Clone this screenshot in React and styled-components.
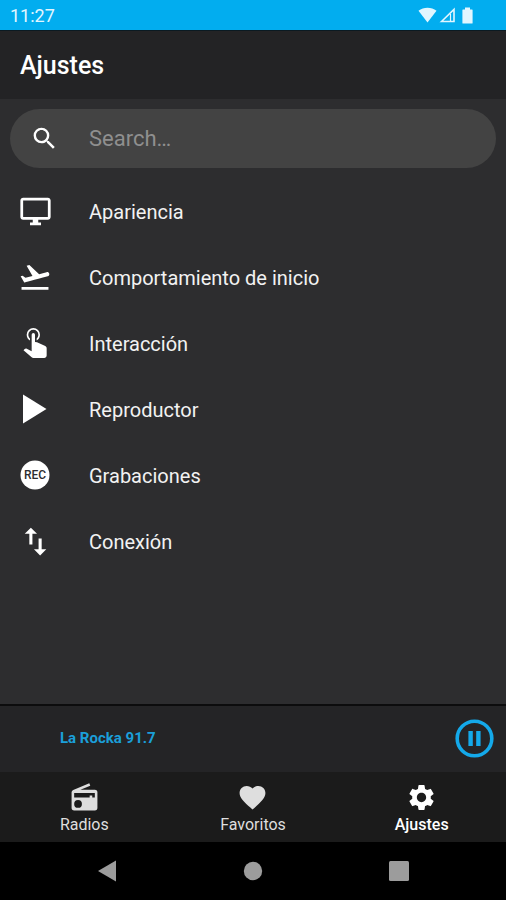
import React from "react";
import styled, { createGlobalStyle } from "styled-components";
import {
  MdSearch,
  MdOutlineDesktopWindows,
  MdFlightTakeoff,
  MdImportExport,
  MdFavorite,
  MdSettings,
} from "react-icons/md";

const GlobalStyle = createGlobalStyle`
  * { box-sizing: border-box; }
  body {
    margin: 0;
    background: #2d2d2f;
    font-family: Roboto, "Liberation Sans", sans-serif;
  }
  button, input { font: inherit; }
`;

const Screen = styled.div`
  display: flex;
  flex-direction: column;
  min-height: 100vh;
  background: #2d2d2f;
  color: #f2f2f2;
`;

const StatusBar = styled.div`
  display: flex;
  align-items: center;
  justify-content: space-between;
  height: 31px;
  padding: 0 30px 0 10px;
  background: #02adef;
  border-bottom: 1px solid #0b1a22;
  color: #e2f6ff;
  font-size: 18px;
`;

const StatusIcons = styled.div`
  display: flex;
  align-items: center;
  gap: 2px;
`;

const Header = styled.header`
  display: flex;
  align-items: center;
  height: 68px;
  padding: 2px 20px 0;
  background: #232325;
`;

const Title = styled.h1`
  margin: 0;
  font-size: 25px;
  line-height: 32px;
  font-weight: 500;
  color: #ffffff;
`;

const Main = styled.main`
  flex: 1;
`;

const SearchBox = styled.label`
  display: flex;
  align-items: center;
  gap: 30px;
  height: 59px;
  margin: 10px 10px;
  padding: 0 20px;
  border-radius: 30px;
  background: #434343;
  color: #ffffff;
`;

const SearchInput = styled.input`
  flex: 1;
  min-width: 0;
  padding: 0;
  border: 0;
  outline: 0;
  background: transparent;
  color: #ffffff;
  font-size: 22px;
  &::placeholder {
    color: #8f8f8f;
    opacity: 1;
  }
`;

const SettingsList = styled.ul`
  margin: 0;
  padding: 0;
  list-style: none;
`;

const SettingButton = styled.button`
  display: flex;
  align-items: center;
  gap: 34px;
  width: 100%;
  height: 66px;
  padding: 0 15px;
  border: 0;
  background: transparent;
  color: #f2f2f2;
  font-size: 20px;
  text-align: left;
`;

const SettingLabel = styled.span`
  padding-top: 2px;
`;

const IconSlot = styled.span`
  display: flex;
  align-items: center;
  justify-content: center;
  width: 40px;
  height: 40px;
  color: #ffffff;
`;

const Player = styled.section`
  display: flex;
  align-items: center;
  justify-content: space-between;
  height: 68px;
  padding: 0 12px 2px 60px;
  border-top: 2px solid #0c0c0d;
  background: #242426;
  color: #1b9fd9;
  font-size: 15px;
  font-weight: 700;
`;

const PauseButton = styled.button`
  display: flex;
  padding: 0;
  border: 0;
  background: transparent;
  color: #14a9ea;
`;

const Tabs = styled.nav`
  display: grid;
  grid-template-columns: repeat(3, 1fr);
  height: 70px;
  background: #1b1b1b;
`;

const Tab = styled.a`
  display: flex;
  flex-direction: column;
  align-items: center;
  padding-top: 10px;
  gap: 2px;
  color: ${(p) => (p.$active ? "#ffffff" : "#dedede")};
  font-size: 16px;
  line-height: 20px;
  font-weight: ${(p) => (p.$active ? 500 : 400)};
  text-decoration: none;
`;

const SystemBar = styled.div`
  display: flex;
  align-items: center;
  justify-content: center;
  gap: 106px;
  height: 58px;
  background: #000000;
`;

const SystemButton = styled.button`
  display: flex;
  align-items: center;
  justify-content: center;
  width: 40px;
  height: 40px;
  padding: 0;
  border: 0;
  background: transparent;
  color: #9c9c9c;
`;

const TouchIcon = () => (
  <svg width="40" height="40" viewBox="0 2 24 24" fill="currentColor" aria-hidden="true">
    <path d="M10 9a1 1 0 0 1 2 0v4.470l1.210.130 4.940 2.190c.530.240.850.770.850 1.350v4.360c-.030.820-.680 1.470-1.500 1.500H11c-.380 0-.740-.150-1-.430l-4.900-4.200.740-.770c.190-.210.460-.320.740-.320h.220L10 19V9m1-4a4 4 0 0 1 4 4c0 1.500-.800 2.770-2 3.460v-1.220c.610-.550 1-1.350 1-2.240a3 3 0 0 0-6 0c0 .890.390 1.690 1 2.240v1.220C7.800 11.770 7 10.500 7 9a4 4 0 0 1 4-4z" />
  </svg>
);

const RadioIcon = () => (
  <svg width="31" height="31" viewBox="0 0 24 24" fill="currentColor" aria-hidden="true">
    <path
      fillRule="evenodd"
      d="M20 6a2 2 0 0 1 2 2v12a2 2 0 0 1-2 2H4a2 2 0 0 1-2-2V8c0-.850.530-1.580 1.280-1.870L15.710 1l.760 1.830L8.830 6H20zM20 8.500H4V12h12v-1.500h2V12h2V8.500zM7 14a3 3 0 1 0 0 6 3 3 0 0 0 0-6z"
    />
  </svg>
);

const PlayIcon = () => (
  <svg width="30" height="30" viewBox="0 0 30 30" fill="currentColor" aria-hidden="true">
    <path d="M3 0.5 26.5 15 3 29.5z" />
  </svg>
);

const RecIcon = () => (
  <svg width="30" height="30" viewBox="0 0 30 30" aria-hidden="true">
    <circle cx="15" cy="15" r="14.5" fill="#ffffff" />
    <text
      x="15"
      y="19"
      textAnchor="middle"
      fill="#2d2d2f"
      fontFamily="Roboto, sans-serif"
      fontWeight="500"
      fontSize="12"
    >
      REC
    </text>
  </svg>
);

const settings = [
  { label: "Apariencia", icon: <MdOutlineDesktopWindows size={33} /> },
  { label: "Comportamiento de inicio", icon: <MdFlightTakeoff size={34} /> },
  { label: "Interacción", icon: <TouchIcon /> },
  { label: "Reproductor", icon: <PlayIcon /> },
  { label: "Grabaciones", icon: <RecIcon /> },
  { label: "Conexión", icon: <MdImportExport size={37} /> },
];

const tabs = [
  { label: "Radios", href: "#radios", icon: <RadioIcon /> },
  { label: "Favoritos", href: "#favoritos", icon: <MdFavorite size={31} /> },
  { label: "Ajustes", href: "#ajustes", icon: <MdSettings size={31} />, active: true },
];

export default function App() {
  return (
    <>
      <GlobalStyle />
      <Screen>
        <StatusBar>
          <span>11:27</span>
          <StatusIcons>
            <svg width="19" height="16" viewBox="0 0 19 16" fill="currentColor" aria-hidden="true">
              <path d="M9.500 15.500 0.500 3.800C5.500-.2 13.500-.2 18.500 3.800z" />
            </svg>
            <svg width="17" height="16" viewBox="0 0 17 16" fill="none" stroke="currentColor" aria-hidden="true">
              <path d="M2.500 14.500 15 2.500v12z" strokeWidth="1.600" />
              <path d="M11.500 7v7" strokeWidth="1.200" />
            </svg>
            <svg width="18" height="17" viewBox="0 0 18 17" fill="currentColor" aria-hidden="true">
              <path d="M7 0.500h5v2h2q.6 0 .6.600v12.800q0 .6-.6.600H5q-.6 0-.6-.6V3.100q0-.6.600-.6h2z" />
            </svg>
          </StatusIcons>
        </StatusBar>
        <Header>
          <Title>Ajustes</Title>
        </Header>
        <Main>
          <SearchBox>
            <MdSearch size={29} />
            <SearchInput type="text" placeholder="Search…" aria-label="Search" />
          </SearchBox>
          <SettingsList>
            {settings.map((s) => (
              <li key={s.label}>
                <SettingButton type="button">
                  <IconSlot>{s.icon}</IconSlot>
                  <SettingLabel>{s.label}</SettingLabel>
                </SettingButton>
              </li>
            ))}
          </SettingsList>
        </Main>
        <Player>
          <span>La Rocka 91.7</span>
          <PauseButton type="button" aria-label="Pausa">
            <svg width="39" height="39" viewBox="0 0 39 39" aria-hidden="true">
              <circle cx="19.500" cy="19.500" r="17.300" fill="none" stroke="currentColor" strokeWidth="3.600" />
              <path d="M13.400 12h4.400v15h-4.400zM21.200 12h4.400v15h-4.400z" fill="currentColor" />
            </svg>
          </PauseButton>
        </Player>
        <Tabs>
          {tabs.map((t) => (
            <Tab
              key={t.label}
              href={t.href}
              $active={t.active}
              aria-current={t.active ? "page" : undefined}
            >
              {t.icon}
              {t.label}
            </Tab>
          ))}
        </Tabs>
        <SystemBar>
          <SystemButton type="button" aria-label="Atrás">
            <svg width="20" height="22" viewBox="0 0 20 22" fill="currentColor" aria-hidden="true">
              <path d="M1 11 19 0.500v21z" />
            </svg>
          </SystemButton>
          <SystemButton type="button" aria-label="Inicio">
            <svg width="20" height="20" viewBox="0 0 20 20" fill="currentColor" aria-hidden="true">
              <circle cx="10" cy="10" r="9.200" />
            </svg>
          </SystemButton>
          <SystemButton type="button" aria-label="Recientes">
            <svg width="20" height="20" viewBox="0 0 20 20" fill="currentColor" aria-hidden="true">
              <rect width="20" height="20" rx="1.500" />
            </svg>
          </SystemButton>
        </SystemBar>
      </Screen>
    </>
  );
}
